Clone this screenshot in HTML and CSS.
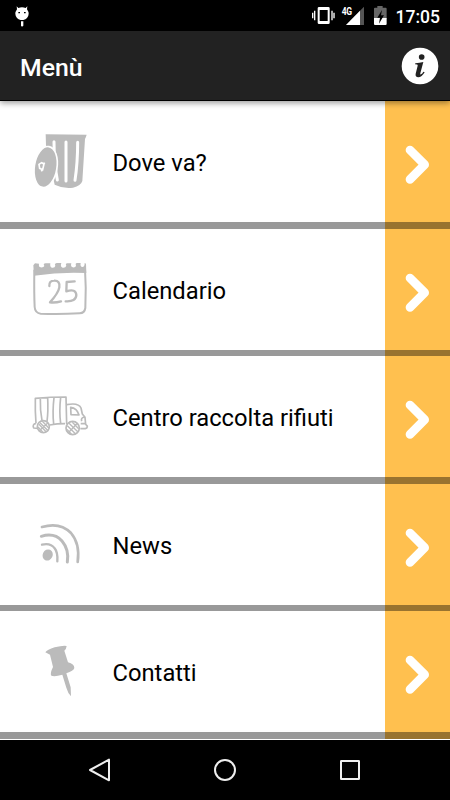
FILE: index.html
```html
<!DOCTYPE html>
<html lang="it">
<head>
<meta charset="utf-8">
<title>Menù</title>
<link rel="stylesheet" href="styles.css">
</head>
<body>
<div class="screen">
  <div class="status">
    <svg class="debug" viewBox="0 0 42 66"><path fill="#fff" d="M5 1l5 5q11-4 22 0l5-5-1 9q10 14 0 26-4 5-11 6h-8q-7-1-11-6-10-12 0-26zM18 46h7v13l-4 3-3-3z"/><path fill="#000" d="M10 18h5v4h-5zM27 18h5v4h-5z"/></svg>
    <svg class="indicators" viewBox="0 0 240 62">
      <path fill="none" stroke="#fff" stroke-width="4" d="M8 23v17M14 17v29M66 17v29M72 23v17"/>
      <path fill="#fff" fill-rule="evenodd" d="M27 6h28q4 0 4 4v43q0 4-4 4H27q-4 0-4-4V10q0-4 4-4zm2 9v33h24V15z"/>
      <path fill="#555" d="M162 5v55h-54z"/><path fill="#fff" d="M150 17v43h-42z"/>
      <text x="95" y="29" fill="#fff" class="net">4G</text>
      <path fill="#666" d="M202 3h16v5h9q3 0 3 3v30h-38V11q0-3 3-3h7z"/>
      <path fill="#fff" d="M192 39h38v18q0 3-3 3h-32q-3 0-3-3z"/>
      <path fill="#000" d="M216 15l-14 23h8l-3 18 15-25h-9z"/>
    </svg>
    <span class="time">17:05</span>
  </div>
  <header class="bar">
    <h1>Menù</h1>
    <svg class="info" viewBox="0 0 114 114"><circle cx="57" cy="57" r="55" fill="#fff"/><circle cx="62" cy="30" r="8.5" fill="#222"/><path fill="#222" d="M43 49q13-1 24-4l-9 34q-1 5 2 3 4-2 7-8l4 2q-9 15-19 15-10-1-8-11l6-24q1-4-8-4z"/></svg>
  </header>
  <main class="list">
    <a class="row">
      <svg class="icon" viewBox="0 0 240 363"><g transform="translate(0 57)">
        <path fill="#bbb" d="M77 43l123 1q-2 7-5 13l-8 126q-4 14-28 20-28 4-55-9L78 76z"/>
        <path fill="none" stroke="#fff" stroke-width="9" stroke-linecap="round" d="M102 65q0 63 10 115M138 66v117M173 67q0 62-8 114"/>
        <ellipse cx="77" cy="141" rx="34" ry="62" transform="rotate(9 77 141)" fill="#bbb" stroke="#fff" stroke-width="5"/>
        <path fill="none" stroke="#fff" stroke-width="5" d="M57 133l8-5 7 4-4 17-9-4zM71 133l3-5M67 148l-3 6"/>
      </g></svg>
      <span class="label">Dove va?</span>
      <span class="go"><svg viewBox="0 0 75 120"><path d="M15 15l44 44-44 44"/></svg></span>
    </a>
    <a class="row">
      <svg class="icon" viewBox="0 0 240 363"><g transform="translate(0 64)">
        <path fill="none" stroke="#bbb" stroke-width="6" d="M43 58q-1 70 1 112 1 18 18 20 55 2 117-1 15-1 17-16 3-60-1-117"/>
        <path fill="#bbb" d="M40 45l5-6 12 1q-2 9 5 11 9 1 11-4-5-8 4-8h14q-2 12 5 13 9 1 10-6-4-6 4-8h14q-4 12 4 14 9 1 11-6-4-6 3-7h12q-3 10 4 12 9 1 10-5-3-7 3-8h11q-2 11 4 12 8 1 8-12l4 2 1 28q-75-4-157 8z"/>
        <path fill="none" stroke="#bbb" stroke-width="7" stroke-linecap="round" stroke-linejoin="round" d="M88 107q-1-16 14-16 19-1 16 20-3 17-28 45 16 2 33-3M164 93l-24 2-1 28q29-9 30 11-1 21-32 19"/>
      </g></svg>
      <span class="label">Calendario</span>
      <span class="go"><svg viewBox="0 0 75 120"><path d="M15 15l44 44-44 44"/></svg></span>
    </a>
    <a class="row">
      <svg class="icon" viewBox="0 0 240 363"><g transform="translate(0 71)" fill="none" stroke="#bbb" stroke-width="5" stroke-linejoin="round">
        <path d="M48 131q-3-36-2-75 45-4 92-4l2 81M61 57q-1 35 5 65M83 54q2 41-2 72M102 54q-5 42-1 79M122 53q-5 42 0 79M89 136q22-4 46-4M48 131q-12 3-7 14l14 1M140 75q36-7 43 10l4 18 8 10 2 21 5 5q0 7-6 8h-15M196 132h-14M193 112q-11 2-8 13"/>
        <path d="M152 83l1 22 24 1q-6-21-25-23z"/>
        <circle cx="70" cy="141" r="18"/><circle cx="158" cy="145" r="20"/>
        <path stroke-width="4" d="M57 134l21 22M60 129l25 25M67 125l20 21M54 142l14 15M58 153l26-24M142 138l25 25M147 131l27 26M157 128l19 19M141 149l13 14M145 159l27-28"/>
      </g></svg>
      <span class="label">Centro raccolta rifiuti</span>
      <span class="go"><svg viewBox="0 0 75 120"><path d="M15 15l44 44-44 44"/></svg></span>
    </a>
    <a class="row">
      <svg class="icon" viewBox="0 0 240 363"><g transform="translate(0 79)" fill="none" stroke="#bbb" stroke-linecap="round">
        <ellipse cx="83" cy="134" rx="15" ry="17" fill="#bbb" stroke="none" transform="rotate(25 83 134)"/>
        <path stroke-width="7" d="M66 103q26-6 38 11 10 13 8 39"/>
        <path stroke-width="9" d="M64 78q39-12 62 14 22 26 16 63"/>
        <path stroke-width="8" d="M66 50q54-16 87 18 28 33 20 87"/>
      </g></svg>
      <span class="label">News</span>
      <span class="go"><svg viewBox="0 0 75 120"><path d="M15 15l44 44-44 44"/></svg></span>
    </a>
    <a class="row">
      <svg class="icon" viewBox="0 0 240 363"><g transform="translate(0 71)" fill="#bbb">
        <path d="M76 53q5-8 28-15 25-6 36-4-1 9-7 14l11 35q19 5 19 17-2 9-24 16l13 42 1 27q-9-9-14-26l-12-39q-23 7-33 3-5-6 5-26L90 60z"/>
      </g></svg>
      <span class="label">Contatti</span>
      <span class="go"><svg viewBox="0 0 75 120"><path d="M15 15l44 44-44 44"/></svg></span>
    </a>
  </main>
  <nav class="nav">
    <svg viewBox="0 0 72 72"><path d="M63 5v62L6 36z"/></svg>
    <svg viewBox="0 0 72 72"><circle cx="36" cy="36" r="30"/></svg>
    <svg viewBox="0 0 72 72"><rect x="9" y="9" width="54" height="54" rx="1"/></svg>
  </nav>
</div>
</body>
</html>
```
FILE: styles.css
```css
* { box-sizing: border-box; }
body { margin: 0; font-family: Roboto, "Liberation Sans", sans-serif; background: #fff; }
.screen { width: 450px; height: 800px; display: flex; flex-direction: column; overflow: hidden; }
.status { height: 31px; flex: none; background: #000; display: flex; align-items: flex-start; padding-left: 15px; }
.debug { width: 14px; height: 22px; margin-top: 6px; }
.indicators { width: 80px; height: 20.67px; margin: 5px 0 0 281px; overflow: visible; }
.net { font-size: 30px; font-weight: 700; letter-spacing: -1px; transform: scaleX(0.85); transform-origin: 95px 0; }
.time { color: #fff; font-size: 17.5px; font-weight: 500; line-height: 34px; margin-left: 5.5px; }
.bar { height: 70.25px; flex: none; background: #222; border-bottom: 1.25px solid #000; display: flex; align-items: center; justify-content: space-between; padding: 0 11px 0 20px; box-shadow: 0 2px 6px rgba(0, 0, 0, 0.4); z-index: 1; }
.bar h1 { margin: 3px 0 0; color: #fff; font-size: 24.8px; font-weight: 500; }
.info { width: 38px; height: 38px; margin-top: 1px; }
.list { flex: 1; display: flex; flex-direction: column; }
.row { height: 127.5px; flex: none; position: relative; display: flex; align-items: stretch; }
.row::after { content: ""; position: absolute; left: 0; right: 0; bottom: 0; height: 6.4px; background: rgba(0, 0, 0, 0.4); }
.icon { width: 80px; height: 121px; margin-left: 20px; flex: none; }
.label { flex: 1; padding-left: 12.5px; color: #000; font-size: 23.75px; line-height: 125px; white-space: nowrap; }
.go { width: 65px; background: #ffc04f; padding: 44px 0 0 20px; }
.go svg { display: block; width: 25px; height: 40px; fill: none; stroke: #fff; stroke-width: 26; stroke-linecap: round; stroke-linejoin: round; }
.nav { height: 60px; flex: none; background: #000; display: flex; justify-content: space-between; align-items: center; padding: 0 88px; }
.nav svg { width: 24px; height: 24px; fill: none; stroke: #eee; stroke-width: 6; stroke-linejoin: round; }
```
